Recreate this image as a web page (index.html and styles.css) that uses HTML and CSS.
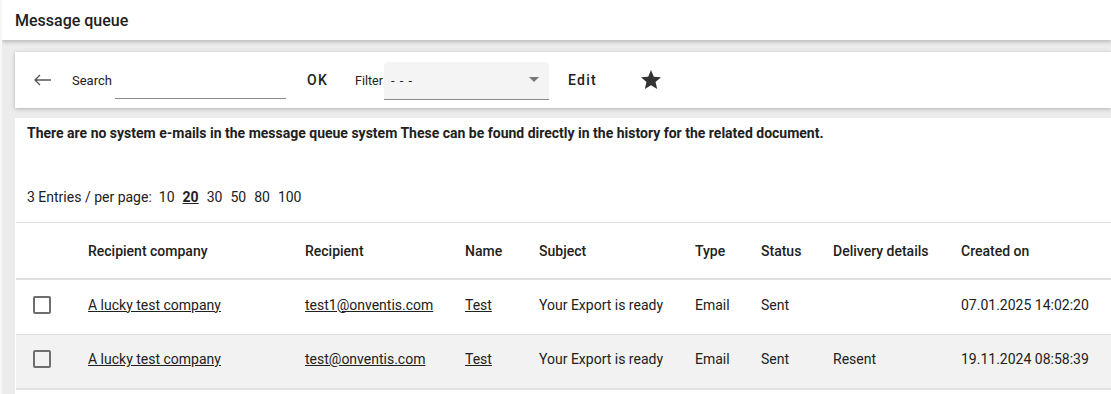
FILE: index.html
```html
<!DOCTYPE html>
<html lang="en">
<head>
  <meta charset="UTF-8" />
  <title>Message queue</title>
  <link rel="stylesheet" href="styles.css">
</head>
<body>
  <header class="page-header">
    <h1>Message queue</h1>
  </header>

  <main class="page-body">
    <div class="toolbar">
      <button class="icon-btn back" type="button" aria-label="Back">
        <svg width="24" height="24" viewBox="0 0 24 24">
          <path d="M4 12H20M9 7L4 12L9 17" fill="none" stroke="#555" stroke-width="1.3" />
        </svg>
      </button>
      <label class="tool-label search-label" for="search">Search</label>
      <input class="search-input" id="search" type="text" />
      <button class="text-btn ok" type="button">OK</button>
      <label class="tool-label filter-label" for="filter">Filter</label>
      <div class="select-box" id="filter">
        <span class="select-value">- - -</span>
        <span class="select-arrow"></span>
      </div>
      <button class="text-btn edit" type="button">Edit</button>
      <button class="icon-btn star" type="button" aria-label="Favourite">
        <svg width="24" height="24" viewBox="0 0 24 24">
          <path d="M12 17.27L18.18 21l-1.64-7.03L22 9.24l-7.19-.61L12 2 9.19 8.63 2 9.24l5.46 4.73L5.82 21z" fill="#333" />
        </svg>
      </button>
    </div>

    <section class="panel">
      <p class="notice">There are no system e-mails in the message queue system These can be found directly in the history for the related document.</p>

      <div class="paging">
        <span>3 Entries / per page:</span>
        <a>10</a>
        <a class="current">20</a>
        <a>30</a>
        <a>50</a>
        <a>80</a>
        <a>100</a>
      </div>

      <div class="grid">
        <div class="row head">
          <div></div>
          <div>Recipient company</div>
          <div>Recipient</div>
          <div>Name</div>
          <div>Subject</div>
          <div>Type</div>
          <div>Status</div>
          <div>Delivery details</div>
          <div>Created on</div>
        </div>
        <div class="row">
          <div><span class="checkbox"></span></div>
          <div><a class="link">A lucky test company</a></div>
          <div><a class="link">test1@onventis.com</a></div>
          <div><a class="link">Test</a></div>
          <div>Your Export is ready</div>
          <div>Email</div>
          <div>Sent</div>
          <div></div>
          <div>07.01.2025 14:02:20</div>
        </div>
        <div class="row alt">
          <div><span class="checkbox"></span></div>
          <div><a class="link">A lucky test company</a></div>
          <div><a class="link">test@onventis.com</a></div>
          <div><a class="link">Test</a></div>
          <div>Your Export is ready</div>
          <div>Email</div>
          <div>Sent</div>
          <div>Resent</div>
          <div>19.11.2024 08:58:39</div>
        </div>
      </div>
    </section>
  </main>
</body>
</html>
```

FILE: styles.css
```css
html, body {
  height: 394px;
  overflow: hidden;
}
body {
  margin: 0;
  font-family: Roboto, "Liberation Sans", sans-serif;
  color: #212121;
  background-color: #ececec;
  border-left: 2px solid #f7f7f7;
}
.page-header {
  height: 40px;
  background-color: white;
  box-shadow: 0 2px 4px rgba(0,0,0,0.22);
  display: flex;
  align-items: center;
  padding-left: 13px;
  position: relative;
  z-index: 1;
}
.page-header h1 {
  margin: 0;
  font-size: 16px;
  font-weight: 500;
}
.page-body {
  padding: 12px 0 0 13px;
}
.toolbar {
  height: 56px;
  background-color: white;
  box-shadow: 0 1px 4px rgba(0,0,0,0.25);
  display: flex;
  align-items: center;
  padding-left: 16px;
}
.icon-btn {
  border: none;
  background: none;
  padding: 0;
  width: 24px;
  height: 24px;
  display: flex;
  cursor: pointer;
}
.tool-label {
  font-size: 13px;
  color: #212121;
}
.search-label {
  margin-left: 17px;
}
.search-input {
  margin-left: 3px;
  width: 171px;
  height: 36px;
  border: none;
  border-bottom: 1px solid #8a8a8a;
  padding: 0;
  align-self: flex-end;
  margin-bottom: 9px;
  outline: none;
  background: none;
}
.text-btn {
  border: none;
  background: none;
  padding: 0;
  font-family: inherit;
  font-size: 14px;
  font-weight: 500;
  letter-spacing: 1.3px;
  color: #212121;
  cursor: pointer;
}
.ok {
  margin-left: 21px;
}
.filter-label {
  margin-left: 27px;
  font-size: 12.5px;
}
.select-box {
  width: 165px;
  height: 38px;
  margin-left: 1px;
  margin-top: 2px;
  background-color: #f4f4f4;
  border-bottom: 1px solid #8a8a8a;
  border-radius: 4px 4px 0 0;
  display: flex;
  align-items: center;
  justify-content: space-between;
  padding: 0 10px 0 7px;
  box-sizing: border-box;
}
.select-value {
  font-size: 13px;
  letter-spacing: 1px;
}
.select-arrow {
  width: 0;
  height: 0;
  border-left: 5px solid transparent;
  border-right: 5px solid transparent;
  border-top: 5px solid #777;
  margin-top: -3px;
}
.edit {
  margin-left: 19px;
}
.star {
  margin-left: 42px;
}
.panel {
  margin-top: 10px;
  background-color: white;
  height: 276px;
}
.notice {
  margin: 0;
  padding: 7px 12px 0;
  font-size: 14px;
  font-weight: 700;
  line-height: 16px;
}
.paging {
  margin-top: 48px;
  padding-left: 12px;
  font-size: 14px;
  display: flex;
  gap: 8px;
  line-height: 16px;
}
.paging span {
  margin-right: -1px;
}
.paging .current {
  font-weight: 700;
  text-decoration: underline;
}
.grid {
  margin-top: 17px;
  border-top: 1px solid #e2e2e2;
  margin-left: 1px;
}
.row {
  display: grid;
  grid-template-columns: 72px 217px 160px 74px 156px 66px 72px 128px 1fr;
  align-items: center;
  height: 55px;
  box-sizing: border-box;
  padding-bottom: 5px;
  border-bottom: 1px solid #e0e0e0;
  font-size: 14px;
}
.row.head {
  height: 57px;
  padding-bottom: 0;
  border-bottom: 2px solid #e0e0e0;
  font-weight: 500;
}
.row.alt {
  background-color: #f2f2f2;
  border-bottom-width: 2px;
}
.checkbox {
  display: block;
  width: 14px;
  height: 14px;
  border: 2px solid #6e6e6e;
  border-radius: 2px;
  margin-left: 17px;
}
.link {
  text-decoration: underline;
  color: #212121;
  cursor: pointer;
}
```
